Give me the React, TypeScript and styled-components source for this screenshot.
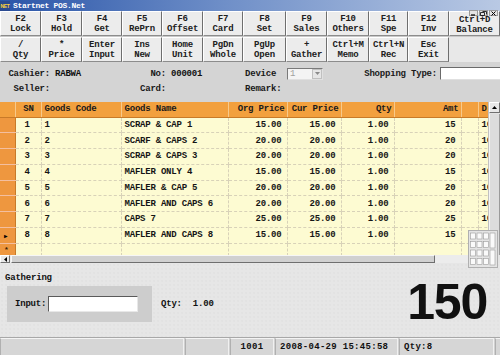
import React from "react";
import styled, { createGlobalStyle } from "styled-components";

const GlobalStyle = createGlobalStyle`
  html, body {
    margin: 0;
    padding: 0;
    background: #d6d6d6;
  }
  body {
    font-family: "Liberation Mono", "DejaVu Sans Mono", monospace;
    font-weight: bold;
    font-size: 9px;
    color: #111;
  }
  * { box-sizing: border-box; }
`;

const keyWidths = [41, 41, 40, 40, 41, 40, 43, 41, 42, 39, 41, 51];

const keyRows = [
  [
    ["F2", "Lock"],
    ["F3", "Hold"],
    ["F4", "Get"],
    ["F5", "RePrn"],
    ["F6", "Offset"],
    ["F7", "Card"],
    ["F8", "Set"],
    ["F9", "Sales"],
    ["F10", "Others"],
    ["F11", "Spe"],
    ["F12", "Inv"],
    ["Ctrl+D", "Balance"],
  ],
  [
    ["/", "Qty"],
    ["*", "Price"],
    ["Enter", "Input"],
    ["Ins", "New"],
    ["Home", "Unit"],
    ["PgDn", "Whole"],
    ["PgUp", "Open"],
    ["+", "Gather"],
    ["Ctrl+M", "Memo"],
    ["Ctrl+N", "Rec"],
    ["Esc", "Exit"],
  ],
];

type Col = { key: string; w: number; label?: string; align?: "left" | "right" | "center" };

const cols: Col[] = [
  { key: "sn", w: 26, label: "SN", align: "center" },
  { key: "code", w: 80, label: "Goods Code", align: "left" },
  { key: "name", w: 107, label: "Goods Name", align: "left" },
  { key: "org", w: 59, label: "Org Price", align: "right" },
  { key: "cur", w: 54, label: "Cur Price", align: "right" },
  { key: "qty", w: 53, label: "Qty", align: "right" },
  { key: "amt", w: 67, label: "Amt", align: "right" },
  { key: "blank", w: 17, label: "", align: "left" },
  { key: "d", w: 40, label: "D", align: "left" },
];

const rows: Record<string, string>[] = [
  { sn: "1", code: "1", name: "SCRAP & CAP 1", org: "15.00", cur: "15.00", qty: "1.00", amt: "15", d: "10" },
  { sn: "2", code: "2", name: "SCARF & CAPS 2", org: "20.00", cur: "20.00", qty: "1.00", amt: "20", d: "10" },
  { sn: "3", code: "3", name: "SCRAP & CAPS 3", org: "20.00", cur: "20.00", qty: "1.00", amt: "20", d: "10" },
  { sn: "4", code: "4", name: "MAFLER ONLY 4", org: "15.00", cur: "15.00", qty: "1.00", amt: "15", d: "10" },
  { sn: "5", code: "5", name: "MAFLER & CAP 5", org: "20.00", cur: "20.00", qty: "1.00", amt: "20", d: "10" },
  { sn: "6", code: "6", name: "MAFLER AND CAPS 6", org: "20.00", cur: "20.00", qty: "1.00", amt: "20", d: "10" },
  { sn: "7", code: "7", name: "CAPS 7", org: "25.00", cur: "25.00", qty: "1.00", amt: "25", d: "10" },
  { sn: "8", code: "8", name: "MAFLER AND CAPS 8", org: "15.00", cur: "15.00", qty: "1.00", amt: "15", d: "" },
];

export default function App() {
  return (
    <>
      <GlobalStyle />
      <Window>
        <TitleBar>
          <AppIcon>NET</AppIcon>
          <TitleText>Startnet POS.Net</TitleText>
        </TitleBar>
        <WinControls>
          <WinBtn>
            <svg width="7" height="5" viewBox="0 0 7 5">
              <path d="M1 4h4" stroke="#000" strokeWidth="1.2" />
            </svg>
          </WinBtn>
          <WinBtn>
            <svg width="7" height="5" viewBox="0 0 7 5">
              <path d="M2.5 0.5h4v3M0.5 1.5h4v3h-4z" stroke="#000" strokeWidth="0.8" fill="none" />
            </svg>
          </WinBtn>
          <WinBtn>
            <svg width="7" height="5" viewBox="0 0 7 5">
              <path d="M1.5 0.5l4 4M5.5 0.5l-4 4" stroke="#000" strokeWidth="1" />
            </svg>
          </WinBtn>
        </WinControls>

        <Toolbar>
          {keyRows.map((row, r) => (
            <KeyRow key={r}>
              {row.map((k, i) => (
                <KeyButton key={i} $w={keyWidths[i]} $low={r === 0 && i === row.length - 1}>
                  <span>{k[0]}</span>
                  <span>{k[1]}</span>
                </KeyButton>
              ))}
            </KeyRow>
          ))}
        </Toolbar>

        <InfoArea>
          <Label>Cashier:</Label>
          <Value>RABWA</Value>
          <Label>No:</Label>
          <Value>000001</Value>
          <LeftLabel>Device</LeftLabel>
          <Select>
            <span>1</span>
            <DropBtn>
              <svg width="5" height="3" viewBox="0 0 5 3">
                <path d="M0 0h5L2.5 3z" fill="#8a8a8a" />
              </svg>
            </DropBtn>
          </Select>
          <Label>Shopping Type:</Label>
          <TextInput />

          <Label>Seller:</Label>
          <Value />
          <Label>Card:</Label>
          <Value />
          <LeftLabel>Remark:</LeftLabel>
        </InfoArea>

        <GridFrame>
          <GridViewport>
            <Table>
              <colgroup>
                <col style={{ width: 15 }} />
                {cols.map((c) => (
                  <col key={c.key} style={{ width: c.w }} />
                ))}
              </colgroup>
              <thead>
                <tr>
                  <HeadCell $align="left" />
                  {cols.map((c) => (
                    <HeadCell key={c.key} $align={c.align}>
                      {c.label}
                    </HeadCell>
                  ))}
                </tr>
              </thead>
              <tbody>
                {rows.map((r, i) => (
                  <tr key={i}>
                    <RowHead>{i === rows.length - 1 ? <Marker>▶</Marker> : null}</RowHead>
                    {cols.map((c) => (
                      <Cell key={c.key} $align={c.align}>
                        {r[c.key] ?? ""}
                      </Cell>
                    ))}
                  </tr>
                ))}
                <NewRow>
                  <RowHead>*</RowHead>
                  {cols.map((c) => (
                    <Cell key={c.key} $align={c.align} />
                  ))}
                </NewRow>
              </tbody>
            </Table>
          </GridViewport>
          <VScroll>
            <ArrowBox>
              <svg width="5" height="3" viewBox="0 0 5 3">
                <path d="M0 3h5L2.5 0z" fill="#000" />
              </svg>
            </ArrowBox>
            <VThumb />
          </VScroll>
          <HScroll>
            <ArrowBox>
              <svg width="3" height="5" viewBox="0 0 3 5">
                <path d="M3 0v5L0 2.5z" fill="#000" />
              </svg>
            </ArrowBox>
            <HThumb />
          </HScroll>
          <Corner />
          <Keypad>
            <svg width="30" height="38" viewBox="0 0 30 38">
              <rect x="0.5" y="0.5" width="29" height="37" fill="#e4e4e4" stroke="#b0b0b0" />
              {[0, 1, 2, 3].map((r) =>
                [0, 1, 2, 3].map((c) =>
                  c === 3 && (r === 1 || r === 3) ? null : (
                    <rect
                      key={`${r}-${c}`}
                      x={2.5 + c * 6.5}
                      y={3 + r * 8.5}
                      width="5"
                      height={c === 3 && (r === 0 || r === 2) ? 15 : 6}
                      fill="#fafafa"
                      stroke="#9a9a9a"
                      strokeWidth="0.6"
                    />
                  )
                )
              )}
            </svg>
          </Keypad>
        </GridFrame>

        <Panel>
          <PanelLeft>
            <GroupTitle>Gathering</GroupTitle>
            <GroupRow>
              <InputBox>
                <span>Input:</span>
                <GatherInput />
              </InputBox>
              <QtyText>
                <span>Qty:</span>
                <span>1.00</span>
              </QtyText>
            </GroupRow>
          </PanelLeft>
          <Total>150</Total>
        </Panel>

        <StatusBar>
          <StatusCell $w={184} />
          <StatusCell $w={44} />
          <StatusCell $w={44} $center>1001</StatusCell>
          <StatusCell $w={123}>2008-04-29 15:45:58</StatusCell>
          <StatusCell $w={95}>Qty:8</StatusCell>
          <StatusCell $w={10} />
        </StatusBar>
      </Window>
    </>
  );
}

const Window = styled.div`
  position: relative;
  width: 500px;
  height: 355px;
  overflow: hidden;
  display: flex;
  flex-direction: column;
  background: #d4d4d4;
`;

const TitleBar = styled.div`
  height: 11px;
  flex: none;
  display: flex;
  align-items: center;
  gap: 3px;
  background: linear-gradient(90deg, #2a55a8 0%, #6f8fc8 45%, #b9c9e4 100%);
`;

const AppIcon = styled.div`
  width: 10px;
  height: 10px;
  background: #2a4a90;
  color: #ffd23a;
  font-family: "Liberation Sans", Arial, sans-serif;
  font-size: 5px;
  line-height: 10px;
  text-align: center;
  letter-spacing: -0.3px;
`;

const TitleText = styled.div`
  color: #fff;
  font-size: 8px;
  line-height: 10px;
  letter-spacing: -0.3px;
`;

const WinControls = styled.div`
  position: absolute;
  top: 10px;
  right: 2px;
  display: flex;
  gap: 1px;
  z-index: 2;
`;

const WinBtn = styled.div`
  width: 9px;
  height: 6px;
  display: flex;
  align-items: center;
  justify-content: center;
  background: #e4e4e4;
  border: 1px solid #9a9a9a;
  svg {
    display: block;
  }
`;

const Toolbar = styled.div`
  flex: none;
  display: flex;
  flex-direction: column;
  gap: 1px;
  background: #c8c8c8;
  height: 51px;
`;

const KeyRow = styled.div`
  display: flex;
  height: 25px;
  background: #e8e8e8;
`;

const KeyButton = styled.div<{ $w: number; $low?: boolean }>`
  width: ${(p) => p.$w}px;
  flex: none;
  display: flex;
  flex-direction: column;
  align-items: center;
  justify-content: center;
  padding-top: ${(p) => (p.$low ? 3 : 0)}px;
  background: #ececec;
  border-top: 1px solid #fff;
  border-left: 1px solid #fff;
  border-right: 1px solid #6e6e6e;
  border-bottom: 1px solid #8c8c8c;
  line-height: 10px;
  letter-spacing: -0.2px;
  color: #202020;
`;

const InfoArea = styled.div`
  flex: none;
  height: 40px;
  padding-top: 5px;
  display: grid;
  grid-template-columns: 50px 85px 31px 77px 41px 42px 111px 64px;
  grid-template-rows: 13px 17px;
  align-items: center;
  letter-spacing: -0.2px;
  background: #d4d4d4;
`;

const Label = styled.div`
  text-align: right;
  white-space: nowrap;
  color: #1a1a1a;
`;

const LeftLabel = styled.div`
  white-space: nowrap;
  padding-left: 2px;
  color: #1a1a1a;
`;

const Value = styled.div`
  padding-left: 5px;
  white-space: nowrap;
`;

const Select = styled.div`
  height: 12px;
  margin: 0 3px 0 3px;
  display: flex;
  align-items: center;
  justify-content: space-between;
  background: #f4f4f4;
  border: 1px solid #7a7a7a;
  border-right-color: #e0e0e0;
  border-bottom-color: #e0e0e0;
  color: #a0a0a0;
  font-weight: normal;
  padding-left: 2px;
`;

const DropBtn = styled.div`
  width: 10px;
  height: 10px;
  display: flex;
  align-items: center;
  justify-content: center;
  background: #e6e6e6;
  border: 1px solid #c0c0c0;
`;

const TextInput = styled.div`
  height: 13px;
  margin-left: 3px;
  background: #fff;
  border: 1px solid #6a6a6a;
  border-right: none;
  border-bottom-color: #e0e0e0;
`;

const GridFrame = styled.div`
  position: relative;
  flex: none;
  height: 161px;
  display: grid;
  grid-template-columns: 1fr 12px;
  grid-template-rows: 1fr 8px;
  background: #d4d4d4;
`;

const GridViewport = styled.div`
  overflow: hidden;
  background: #fdfbd2;
`;

const Table = styled.table`
  table-layout: fixed;
  border-collapse: collapse;
  width: 518px;
  letter-spacing: -0.2px;
`;

const HeadCell = styled.th<{ $align?: string }>`
  height: 15px;
  padding: 0 2px 0 3px;
  background: #f2a03e;
  border-right: 1px solid #f7c98a;
  border-bottom: 1px solid #c87a28;
  text-align: ${(p) => p.$align ?? "left"};
  white-space: nowrap;
  overflow: hidden;
  color: #1a1a1a;
  font-weight: bold;
`;

const RowHead = styled.td`
  height: 15.75px;
  padding: 0 0 0 4px;
  background: #ee973f;
  border-bottom: 1px solid #f3bfa0;
  border-right: 1px solid #c87a28;
  font-size: 8px;
  color: #3a2000;
`;

const Marker = styled.span`
  font-size: 6px;
  color: #000;
`;

const Cell = styled.td<{ $align?: string }>`
  height: 15.75px;
  padding: 0 5px 0 3px;
  border-right: 1px dashed #d8d2b8;
  border-bottom: 1px dashed #d8d2b8;
  text-align: ${(p) => p.$align ?? "left"};
  white-space: nowrap;
  overflow: hidden;
  color: #151515;
`;

const NewRow = styled.tr`
  td {
    height: 12px;
  }
`;

const VScroll = styled.div`
  display: flex;
  flex-direction: column;
  background: #e2e2e2;
  border-left: 1px solid #c0c0c0;
`;

const ArrowBox = styled.div`
  flex: none;
  width: 11px;
  height: 11px;
  display: flex;
  align-items: center;
  justify-content: center;
  background: #e8e8e8;
  border-top: 1px solid #fff;
  border-left: 1px solid #fff;
  border-right: 1px solid #707070;
  border-bottom: 1px solid #707070;
`;

const VThumb = styled.div`
  flex: 1;
  margin-top: 1px;
  background: #dcdcdc;
  border-left: 1px solid #f4f4f4;
  border-right: 1px solid #9a9a9a;
`;

const HScroll = styled.div`
  display: flex;
  align-items: stretch;
  background: #ececec;
  ${ArrowBox} {
    height: 8px;
    width: 10px;
  }
`;

const HThumb = styled.div`
  width: 424px;
  margin-left: 1px;
  background: #d0d0d0;
  border-top: 1px solid #f6f6f6;
  border-left: 1px solid #f6f6f6;
  border-right: 1px solid #6e6e6e;
  border-bottom: 1px solid #6e6e6e;
`;

const Corner = styled.div`
  background: #e4e4e4;
`;

const Keypad = styled.div`
  position: absolute;
  right: 2px;
  bottom: -5px;
  width: 30px;
  height: 38px;
  z-index: 2;
  svg {
    display: block;
  }
`;

const Panel = styled.div`
  flex: none;
  height: 74px;
  display: flex;
  align-items: center;
  justify-content: space-between;
  padding: 0 13px 0 5px;
  background-color: #e6e6e6;
  background-image: radial-gradient(#dcdcdc 0.6px, transparent 0.8px);
  background-size: 4px 4px;
`;

const PanelLeft = styled.div`
  display: flex;
  flex-direction: column;
  align-self: flex-start;
  padding-top: 10px;
  gap: 3px;
`;

const GroupTitle = styled.div`
  height: 10px;
  line-height: 10px;
  letter-spacing: -0.2px;
`;

const GroupRow = styled.div`
  display: flex;
  align-items: center;
  gap: 9px;
`;

const InputBox = styled.div`
  width: 145px;
  height: 36px;
  margin-left: 2px;
  display: flex;
  align-items: center;
  gap: 2px;
  padding-left: 8px;
  background: #cdcdcd;
  letter-spacing: -0.2px;
`;

const GatherInput = styled.div`
  width: 90px;
  height: 16px;
  background: #fff;
  border: 1px solid #5a5a5a;
  border-right-color: #e8e8e8;
  border-bottom-color: #e8e8e8;
`;

const QtyText = styled.div`
  display: flex;
  gap: 11px;
  letter-spacing: -0.2px;
  padding-bottom: 1px;
`;

const Total = styled.div`
  font-family: "Liberation Sans", Arial, sans-serif;
  font-weight: bold;
  font-size: 50px;
  line-height: 50px;
  color: #111;
  letter-spacing: -1.2px;
  margin-top: 4px;
`;

const StatusBar = styled.div`
  flex: none;
  height: 18px;
  display: flex;
  gap: 1px;
  background: #d0d0d0;
  border-top: 1px solid #a8a8a8;
`;

const StatusCell = styled.div<{ $w: number; $center?: boolean }>`
  width: ${(p) => p.$w}px;
  flex: none;
  display: flex;
  align-items: center;
  justify-content: ${(p) => (p.$center ? "center" : "flex-start")};
  padding-left: ${(p) => (p.$center ? 0 : 4)}px;
  background: #d6d6d6;
  border-left: 1px solid #b0b0b0;
  border-top: 1px solid #f4f4f4;
  border-right: 1px solid #f0f0f0;
  letter-spacing: 0.3px;
  white-space: nowrap;
`;
